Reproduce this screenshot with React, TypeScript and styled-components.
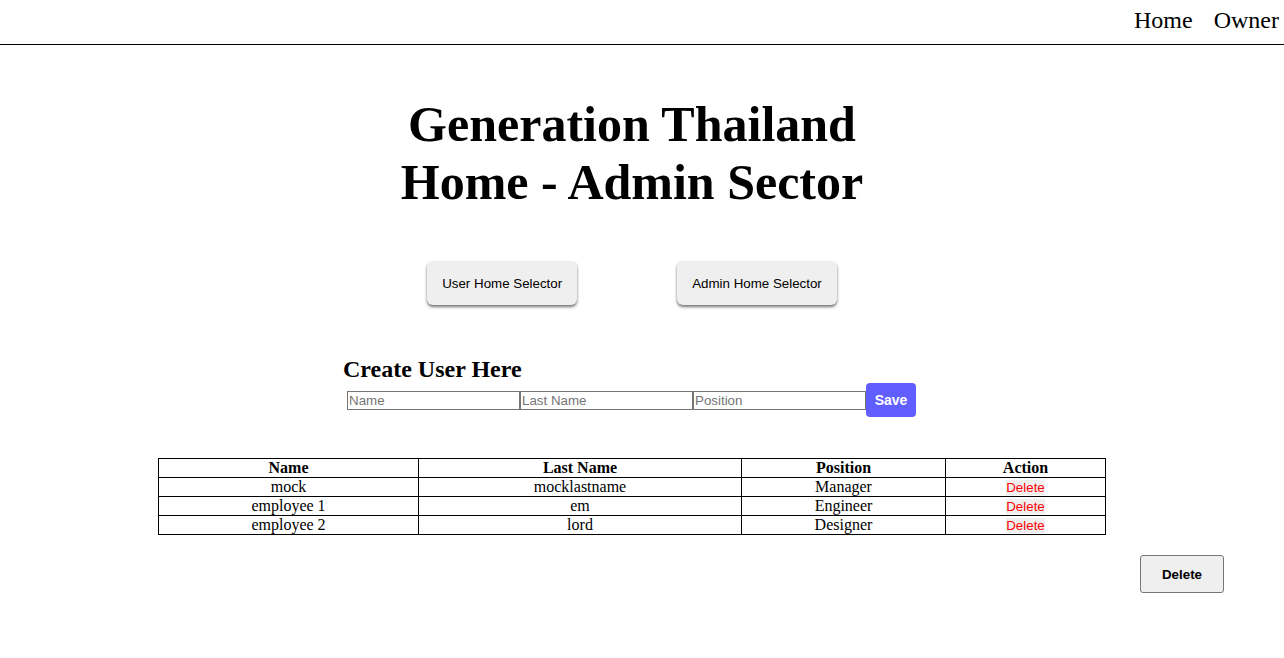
import React from "react";
import styled, { createGlobalStyle } from "styled-components";

const GlobalStyle = createGlobalStyle`
  html, body { margin: 0; padding: 0; background: #ffffff; }
  body { font-family: "Liberation Serif", "Times New Roman", serif; color: #000; }
  * { box-sizing: border-box; }
`;

const NavBar = styled.nav`
  display: flex;
  justify-content: flex-end;
  align-items: flex-start;
  gap: 21px;
  height: 45px;
  padding: 7px 5px 0 0;
  border-bottom: 1px solid #000;
  font-family: "Liberation Serif", "Times New Roman", serif;
  font-size: 24px;
  line-height: normal;
`;

const NavLink = styled.a`
  color: #000;
  text-decoration: none;
`;

const Main = styled.main`
  width: 1264px;
  display: flex;
  flex-direction: column;
  align-items: center;
`;

const Title = styled.h1`
  margin: 50px 0 0;
  font-size: 50px;
  font-weight: bold;
  line-height: normal;
  text-align: center;
`;

const SelectorRow = styled.div`
  display: flex;
  gap: 100px;
  margin-top: 50px;
`;

const SelectorButton = styled.button`
  height: 44px;
  padding: 0 15px;
  border: none;
  border-radius: 6px;
  background: #efefef;
  box-shadow: 0 2px 3px rgba(0, 0, 0, 0.55);
  font-family: "Liberation Sans", Arial, sans-serif;
  font-size: 13.333px;
  color: #000;
`;

const CreateSection = styled.section`
  width: 578px;
  margin-top: 51px;
  display: flex;
  flex-direction: column;
`;

const CreateTitle = styled.h2`
  margin: 0;
  font-size: 24px;
  font-weight: bold;
  line-height: normal;
`;

const FormRow = styled.div`
  display: flex;
  align-items: center;
  padding-left: 4px;
`;

const TextInput = styled.input`
  width: 173px;
  height: 19px;
  padding: 0 1px;
  border: 1px solid #767676;
  font-family: "Liberation Sans", Arial, sans-serif;
  font-size: 13.333px;
  &::placeholder { color: #757575; }
`;

const SaveButton = styled.button`
  width: 50px;
  height: 34px;
  border: none;
  border-radius: 4px;
  background: #615eff;
  color: #fff;
  font-family: "Liberation Sans", Arial, sans-serif;
  font-size: 14px;
  font-weight: bold;
`;

const Table = styled.table`
  width: 948px;
  margin-top: 41px;
  border-collapse: collapse;
  font-size: 16px;
`;

const HeadCell = styled.th<{ $w: number }>`
  width: ${(p) => p.$w}px;
  border: 1px solid #000;
  padding: 0;
  font-weight: bold;
  text-align: center;
  line-height: normal;
`;

const Cell = styled.td`
  border: 1px solid #000;
  padding: 0;
  text-align: center;
  line-height: normal;
`;

const LinkButton = styled.button`
  border: none;
  padding: 0;
  background: #efefef;
  color: #ff0000;
  font-family: "Liberation Sans", Arial, sans-serif;
  font-size: 13.333px;
  line-height: normal;
`;

const DeleteButton = styled.button`
  align-self: flex-end;
  margin: 20px 40px 0 0;
  width: 84px;
  height: 38px;
  border: 1px solid #767676;
  border-radius: 3px;
  background: #efefef;
  font-family: "Liberation Sans", Arial, sans-serif;
  font-size: 13.333px;
  font-weight: bold;
  color: #000;
`;

const rows = [
  { name: "mock", last: "mocklastname", position: "Manager" },
  { name: "employee 1", last: "em", position: "Engineer" },
  { name: "employee 2", last: "lord", position: "Designer" },
];

export default function App() {
  return (
    <>
      <GlobalStyle />
      <NavBar>
        <NavLink href="#">Home</NavLink>
        <NavLink href="#">Owner</NavLink>
      </NavBar>
      <Main>
        <Title>
          Generation Thailand
          <br />
          Home - Admin Sector
        </Title>
        <SelectorRow>
          <SelectorButton>User Home Selector</SelectorButton>
          <SelectorButton>Admin Home Selector</SelectorButton>
        </SelectorRow>
        <CreateSection>
          <CreateTitle>Create User Here</CreateTitle>
          <FormRow>
            <TextInput placeholder="Name" />
            <TextInput placeholder="Last Name" />
            <TextInput placeholder="Position" />
            <SaveButton>Save</SaveButton>
          </FormRow>
        </CreateSection>
        <Table>
          <thead>
            <tr>
              <HeadCell $w={260}>Name</HeadCell>
              <HeadCell $w={323}>Last Name</HeadCell>
              <HeadCell $w={204}>Position</HeadCell>
              <HeadCell $w={160}>Action</HeadCell>
            </tr>
          </thead>
          <tbody>
            {rows.map((r) => (
              <tr key={r.name}>
                <Cell>{r.name}</Cell>
                <Cell>{r.last}</Cell>
                <Cell>{r.position}</Cell>
                <Cell>
                  <LinkButton>Delete</LinkButton>
                </Cell>
              </tr>
            ))}
          </tbody>
        </Table>
        <DeleteButton>Delete</DeleteButton>
      </Main>
    </>
  );
}
